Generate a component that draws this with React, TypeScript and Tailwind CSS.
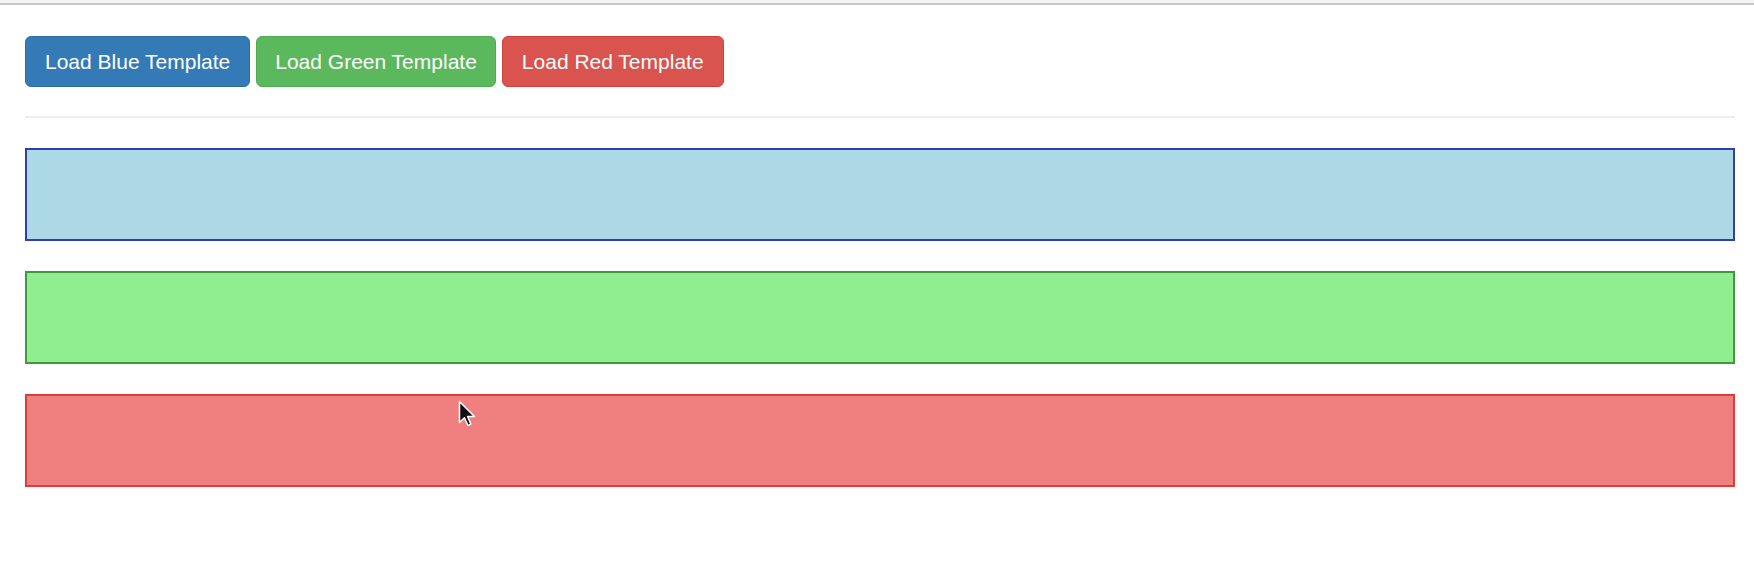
import React from "react";

export default function App() {
  const font = { fontFamily: '"Liberation Sans", Arial, sans-serif' };
  return (
    <div className="relative w-[1754px] h-[586px] bg-white overflow-hidden" style={font}>
      <div className="h-[3px] bg-[#f4f4f4]" />
      <div className="h-[2px] bg-[#c9c9c9]" />
      <div className="pl-[25px] pr-[19px]">
        <div className="flex gap-[6px] mt-[31px]">
          <button className="h-[51px] px-[19px] rounded-[6px] border border-[#2e6da4] bg-[#337ab7] text-white text-[21px] leading-none">
            Load Blue Template
          </button>
          <button className="h-[51px] px-[18px] rounded-[6px] border border-[#4cae4c] bg-[#5cb85c] text-white text-[21px] leading-none">
            Load Green Template
          </button>
          <button className="h-[51px] px-[19px] rounded-[6px] border border-[#d43f3a] bg-[#d9534f] text-white text-[21px] leading-none">
            Load Red Template
          </button>
        </div>
        <div className="mt-[29px] h-[2px] bg-[#eeeeee]" />
        <div className="mt-[30px] flex flex-col gap-[30px]">
          <div className="h-[93px] bg-[#add8e6] border-2 border-[#2f3fb3]" />
          <div className="h-[93px] bg-[#90ee90] border-2 border-[#3f9a3f]" />
          <div className="h-[93px] bg-[#f08080] border-2 border-[#de3b3b]" />
        </div>
      </div>
      <svg
        className="absolute left-[458px] top-[400px]"
        width="18"
        height="27"
        viewBox="0 0 12 18"
      >
        <path
          d="M1 1 L1 15 L4.3 11.8 L6.6 17 L8.6 16.1 L6.4 11 L11 11 Z"
          fill="#111"
          stroke="#fff"
          strokeWidth="1"
          strokeLinejoin="round"
        />
      </svg>
    </div>
  );
}
